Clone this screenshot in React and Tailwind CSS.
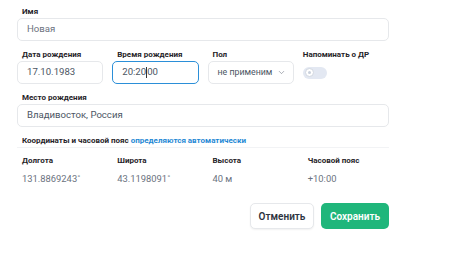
import { ChevronDown } from "lucide-react";

function Label({ children }) {
  return (
    <div className="h-3 text-[8px] leading-3 font-bold text-[#1f2328] pl-[5px] whitespace-nowrap">
      {children}
    </div>
  );
}

function Field({ value, focused, muted }) {
  return (
    <div
      className={`h-[23px] flex items-center pl-[9px] rounded-[5px] bg-white text-[9.6px] ${
        muted ? "text-[#6b7280]" : "text-[#4b5563]"
      } ${focused ? "border-[1.5px] border-[#2b8fd8]" : "border border-[#e6e8eb]"}`}
    >
      {value}
    </div>
  );
}

export default function App() {
  return (
    <div className="w-[450px] h-[253px] bg-white font-['Roboto',sans-serif] overflow-hidden">
      <div className="w-[372px] ml-[17px] pt-[6px]">
        {/* Name */}
        <Label>Имя</Label>
        <Field value="Новая" muted />

        {/* Birth row */}
        <div className="grid grid-cols-4 gap-x-[9px] mt-[8px]">
          <div>
            <Label>Дата рождения</Label>
            <Field value="17.10.1983" />
          </div>
          <div>
            <Label>Время рождения</Label>
            <Field
              focused
              value={
                <span className="flex items-center">
                  20:20<span className="w-px h-[11px] bg-[#333]" />00
                </span>
              }
            />
          </div>
          <div>
            <Label>Пол</Label>
            <div className="h-[23px] flex items-center pl-[9px] pr-[7px] rounded-[5px] border border-[#e6e8eb] text-[8.8px] text-[#4b5563] whitespace-nowrap">
              <span>не применим</span>
              <ChevronDown size={9} strokeWidth={1.5} className="ml-auto shrink-0 text-[#6b7280]" />
            </div>
          </div>
          <div>
            <div className="h-3 text-[8px] leading-3 font-bold text-[#1f2328] whitespace-nowrap">
              Напоминать о ДР
            </div>
            <div className="h-[23px] flex items-center">
              <div className="w-[24px] h-[12px] rounded-full bg-[#e3e8f2] flex items-center pl-[2px]">
                <div className="w-[9px] h-[9px] rounded-full bg-white border border-[#d1d7e0] flex items-center justify-center">
                  <div className="w-[3px] h-[3px] rounded-full bg-[#c9d0dc]" />
                </div>
              </div>
            </div>
          </div>
        </div>

        {/* Birth place */}
        <div className="mt-[8px]">
          <Label>Место рождения</Label>
          <Field value="Владивосток, Россия" />
        </div>

        {/* Coordinates */}
        <div className="mt-[8px] pl-[5px] h-[13px] text-[8px] leading-3 font-bold text-[#1f2328] border-b border-[#f2f3f5]">
          Координаты и часовой пояс{" "}
          <span className="text-[#1e88d4]">определяются автоматически</span>
        </div>

        <div className="grid grid-cols-4 gap-x-[9px] mt-[7px]">
          {[
            ["Долгота", "131.8869243˚"],
            ["Широта", "43.1198091˚"],
            ["Высота", "40 м"],
            ["Часовой пояс", "+10:00"],
          ].map(([k, v]) => (
            <div key={k} className="pl-[5px]">
              <div className="text-[8px] leading-3 font-bold text-[#1f2328]">{k}</div>
              <div className="mt-[6px] text-[9.4px] leading-3 text-[#6b7280]">{v}</div>
            </div>
          ))}
        </div>

        {/* Buttons */}
        <div className="flex justify-end gap-[7px] mt-[18px]">
          <button className="h-[26px] w-[64px] rounded-[5px] border border-[#e6e8eb] bg-white text-[10px] font-semibold text-[#2d3340] shadow-[0_1px_2px_rgba(0,0,0,0.06)]">
            Отменить
          </button>
          <button className="h-[26px] w-[68px] rounded-[5px] bg-[#1fb67b] text-[10px] font-semibold text-white">
            Сохранить
          </button>
        </div>
      </div>
    </div>
  );
}
